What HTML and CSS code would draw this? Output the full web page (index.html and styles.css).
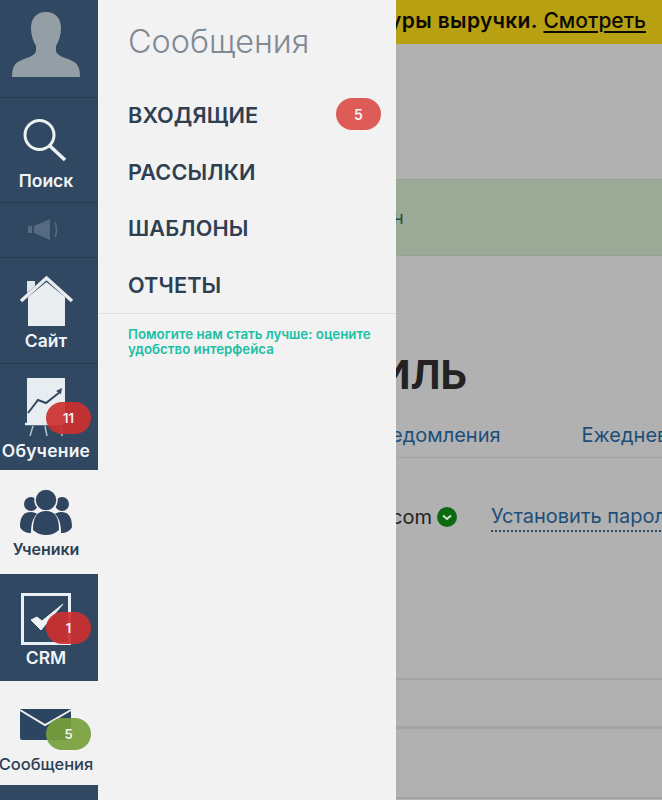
FILE: index.html
```html
<!DOCTYPE html>
<html lang="ru">
<head>
<meta charset="utf-8">
<title>Сообщения</title>
<link rel="stylesheet" href="styles.css">
</head>
<body>
<main class="page">
  <div class="banner"><span><span class="banner-lead">Новые структуры выручки.</span> <a href="#">Смотреть</a></span></div>
  <div class="notice"><span>Ваш email подтвержден</span></div>
  <h1 class="profile-title">ПРОФИЛЬ</h1>
  <div class="tabs"><a href="#">Уведомления</a><a href="#">Ежедневные</a></div>
  <div class="email-row">
    <span class="email">name@gmail.com</span>
    <svg class="verified" viewBox="0 0 20 20"><circle cx="10" cy="10" r="10" fill="#0d6a12"/><path d="M6 8.500l4 3.500 4-3.500" fill="none" stroke="#cfe6cf" stroke-width="2"/></svg>
    <a class="set-pass" href="#">Установить пароль</a>
  </div>
  <div class="rule rule-a"></div>
  <div class="rule rule-b"></div>
  <div class="rule rule-c"></div>
</main>

<div class="overlay">
  <nav class="rail">
    <a class="item item-profile" href="#">
      <svg class="ic" viewBox="0 12 98 66" height="66"><path d="M46 12c-9 0-15 6-15 16 0 7 2 13 5 18v5c-1 4-6 6-12 8-8 3-12 6-12 18h68c0-12-4-15-12-18-6-2-11-4-12-8v-5c3-5 5-11 5-18 0-10-6-16-15-16z" fill="#949fa5"/></svg>
    </a>
    <a class="item item-search" href="#">
      <svg class="ic" viewBox="0 116 98 52" height="52"><circle cx="39.500" cy="135" r="14.500" fill="none" stroke="#eef1f3" stroke-width="3"/><path d="M50 146l15 14" stroke="#eef1f3" stroke-width="3.500" fill="none"/></svg>
      <span class="label">Поиск</span>
    </a>
    <a class="item item-sound" href="#">
      <svg class="ic" viewBox="0 218 98 24" height="24"><path d="M28 226h4v7h-4zM34 226l16-7v21l-16-7z" fill="#566b83"/><path d="M55 222q3 8 0 15" fill="none" stroke="#566b83" stroke-width="1.500"/></svg>
    </a>
    <a class="item item-site" href="#">
      <svg class="ic" viewBox="0 272 98 56" height="56"><path d="M27 281h8v5l-8 7z" fill="#dfe5ea"/><path d="M28 297l18.500-15 18.500 15v29H28z" fill="#e9edf0"/><path d="M21 301l25.500-23 25.500 23" fill="none" stroke="#e9edf0" stroke-width="3.500"/></svg>
      <span class="label">Сайт</span>
    </a>
    <a class="item item-learn" href="#">
      <svg class="ic" viewBox="0 374 98 64" height="64"><path d="M27 378h38v45H27z" fill="#e8edf1"/><path d="M28 413l10-13 8 3 14-11" fill="none" stroke="#34495f" stroke-width="2"/><path d="M56 391l6-3-1 6z" fill="#34495f"/><path d="M25 424h38" stroke="#e8edf1" stroke-width="2.500"/><path d="M33 426l-3 10M45 426l2 10M61 426l1 10" stroke="#b6c2cc" stroke-width="1.500"/></svg>
      <span class="label label-wide">Обучение</span>
      <b class="pill pill-red">11</b>
    </a>
    <a class="item item-students" href="#">
      <svg class="ic" viewBox="0 484 98 53" height="53"><g fill="#2f4560"><circle cx="31" cy="504" r="7"/><circle cx="62" cy="504" r="7"/><path d="M20 527c0-11 4-15 11-15 3 0 5 1 6 2-4 4-6 9-6 19-5 0-9-2-11-6zM72 527c0-11-4-15-11-15-3 0-5 1-6 2 4 4 6 9 6 19 5 0 9-2 11-6z"/></g><circle cx="46" cy="500" r="11" fill="#2f4560" stroke="#f2f2f3" stroke-width="1.500"/><path d="M33 530c0-13 4-19 13-19s13 6 13 19c-3 3-8 5-13 5s-10-2-13-5z" fill="#2f4560"/></svg>
      <span class="label label-small">Ученики</span>
    </a>
    <a class="item item-crm" href="#">
      <svg class="ic" viewBox="0 588 98 57" height="57"><rect x="22.500" y="594.500" width="47" height="49" fill="none" stroke="#e8eff6" stroke-width="3"/><path d="M31 620l10 10 22-26-21 17-5-4z" fill="#eef2f5" stroke="#eef2f5" stroke-width="1"/></svg>
      <span class="label">CRM</span>
      <b class="pill pill-red">1</b>
    </a>
    <a class="item item-messages" href="#">
      <svg class="ic" viewBox="0 700 98 52" height="52"><path d="M20 709h51v31H22q-2 0-2-2z" fill="#2c4560"/><path d="M20 710l25 15 26-15" fill="none" stroke="#f2f2f3" stroke-width="2"/></svg>
      <span class="label">Сообщения</span>
      <b class="pill pill-green">5</b>
    </a>
    <div class="rail-rest"></div>
  </nav>

  <aside class="panel">
    <h2 class="panel-title">Сообщения</h2>
    <ul class="menu">
      <li><a href="#">ВХОДЯЩИЕ</a><b class="count">5</b></li>
      <li><a href="#">РАССЫЛКИ</a></li>
      <li><a href="#">ШАБЛОНЫ</a></li>
      <li><a href="#">ОТЧЕТЫ</a></li>
    </ul>
    <a class="feedback" href="#">Помогите нам стать лучше: оцените удобство интерфейса</a>
  </aside>
</div>
</body>
</html>
```

FILE: styles.css
```css
* { box-sizing: border-box; }
html, body { margin: 0; height: 800px; overflow: hidden; }
body { font-family: Inter, "Liberation Sans", sans-serif; background: #b1b1b1; }
a { text-decoration: none; color: inherit; }

.page { height: 800px; background: #b1b1b1; color: #222; overflow: hidden; }
.banner { height: 44px; background: #b8a013; color: #0b0a02; font-size: 21px; font-weight: 500; display: flex; justify-content: flex-end; align-items: center; padding: 0 16px 4px 0; white-space: nowrap; }
.banner-lead { font-weight: 600; letter-spacing: .35px; }
.banner a { text-decoration: underline; text-underline-offset: 3px; }
.notice { margin-top: 135px; height: 77px; background: #9ba997; border-top: 1px solid #95a392; border-bottom: 1px solid #95a392; color: #2f4a34; font-size: 18px; display: flex; align-items: center; padding-left: 192px; white-space: nowrap; }
.profile-title { margin: 96px 0 0 260px; font-size: 40px; line-height: 46px; font-weight: 700; color: #222; white-space: nowrap; }
.tabs { margin-top: 23px; height: 37px; display: flex; gap: 81px; padding: 0 0 0 368px; font-size: 20px; line-height: 28px; color: #1d4e79; white-space: nowrap; border-bottom: 1px solid #a3a3a3; }
.email-row { margin-top: 43px; height: 32px; display: flex; align-items: center; padding-left: 263px; white-space: nowrap; font-size: 20px; }
.email { color: #222; }
.verified { width: 20px; height: 20px; margin-left: 5px; flex: none; }
.set-pass { margin-left: 34px; color: #1d4e79; border-bottom: 2px dotted #2b4a66; line-height: 27px; }
.rule { height: 2px; background: #a4a4a4; }
.rule-a { margin-top: 145px; }
.rule-b { margin-top: 46px; height: 3px; }
.rule-c { margin-top: 68px; }

.overlay { position: absolute; left: 0; top: 0; height: 800px; display: flex; }
.rail { width: 98px; height: 800px; background: #304861; display: flex; flex-direction: column; overflow: hidden; }
.item { position: relative; display: flex; flex-direction: column; align-items: center; color: #f2f4f6; }
.ic { display: block; width: 98px; flex: none; }
.label { margin: 1px 6px 0 0; font-size: 17.500px; line-height: 24px; font-weight: 600; white-space: nowrap; }
.label-wide { font-size: 17.500px; letter-spacing: .2px; }
.label-small { margin-top: 0; font-size: 16px; }
.item-profile { height: 98px; padding-top: 12px; border-bottom: 1px solid #253b53; }
.item-search { height: 105px; padding-top: 18px; border-bottom: 1px solid #253b53; }
.item-sound { height: 55px; padding-top: 15px; border-bottom: 1px solid #253b53; }
.item-site { height: 106px; padding-top: 14px; border-bottom: 1px solid #253b53; }
.item-learn { height: 106px; padding-top: 10px; }
.item-students { height: 104px; padding-top: 14px; background: #f2f2f3; color: #2d3f53; }
.item-crm { height: 107px; padding-top: 14px; }
.item-messages { height: 104px; padding-top: 19px; background: #f2f2f3; color: #2d3f53; }
.rail-rest { flex: 1; }
.item-messages .label { margin-top: 0; font-size: 16.500px; font-weight: 500; }
.pill { position: absolute; left: 46px; width: 45px; height: 32px; border-radius: 16px; display: flex; align-items: center; justify-content: center; font-size: 13px; font-weight: 600; color: #f4f4f4; }
.pill-red { background: rgba(205, 48, 48, .92); top: 38px; }
.pill-green { background: rgba(120, 160, 60, .92); top: 37px; }

.panel { width: 298px; height: 800px; background: #f2f2f3; }
.panel-title { margin: 0; padding: 22px 0 0 30px; font-size: 32.400px; line-height: 40px; font-weight: 300; color: #808a94; }
.menu { list-style: none; margin: 25px 0 0; padding: 0 15px 0 30px; border-bottom: 1px solid #dfe0e1; height: 227px; }
.menu li { height: 56.500px; display: flex; align-items: center; justify-content: space-between; font-size: 21.700px; font-weight: 600; color: #2f3f52; letter-spacing: .1px; }
.count { width: 45px; height: 32px; border-radius: 16px; background: #de5c57; color: #f8f2f1; font-size: 14px; font-weight: 600; display: flex; align-items: center; justify-content: center; margin-top: -2px; }
.feedback { display: block; margin: 13px 20px 0 30px; font-size: 13.300px; line-height: 15px; font-weight: 600; color: #1cc0a4; }
```
